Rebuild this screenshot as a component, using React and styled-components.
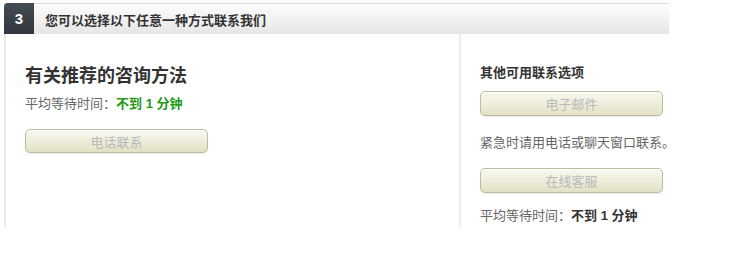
import React from "react";
import styled, { createGlobalStyle } from "styled-components";

const Global = createGlobalStyle`
  html, body { margin: 0; padding: 0; background: #fff; }
  body { font-family: "Liberation Sans", "Noto Sans CJK SC", sans-serif; color: #333; }
`;

const Panel = styled.div`
  margin: 3px 0 0 4px;
  width: 665px;
`;

const Header = styled.div`
  display: flex;
  align-items: stretch;
  height: 30px;
  border-top: 1px solid #dcdcdc;
  background: linear-gradient(#fdfdfd, #e6e6e6);
`;

const StepNo = styled.div`
  width: 30px;
  display: flex;
  align-items: center;
  justify-content: center;
  background: linear-gradient(#454b52, #30363c);
  color: #fff;
  font-weight: bold;
  font-size: 15px;
  border-top-left-radius: 4px;
  margin-top: -1px;
`;

const HeaderTitle = styled.div`
  display: flex;
  align-items: center;
  padding-left: 11px;
  font-size: 13px;
  font-weight: bold;
  color: #333;
`;

const Body = styled.div`
  display: grid;
  grid-template-columns: 455px 1fr;
  height: 193px;
`;

const Column = styled.div`
  border-left: 2px solid #ececec;
  padding: ${(p) => p.$pad};
  display: flex;
  flex-direction: column;
  align-items: flex-start;
  min-width: 0;
`;

const BigTitle = styled.h2`
  margin: 0;
  font-size: 18px;
  line-height: 22px;
  font-weight: bold;
  color: #333;
`;

const SmallTitle = styled.h3`
  margin: 0;
  font-size: 13px;
  line-height: 16px;
  font-weight: bold;
  color: #333;
`;

const Text = styled.p`
  margin: ${(p) => p.$mt}px 0 0 0;
  font-size: 13px;
  line-height: 16px;
  color: #666;
  white-space: nowrap;
`;

const Strong = styled.span`
  font-weight: bold;
  color: ${(p) => (p.$green ? "#229a14" : "#333")};
`;

const Button = styled.button`
  margin-top: ${(p) => p.$mt}px;
  width: 183px;
  height: ${(p) => p.$h}px;
  border: 1px solid #bdbca0;
  border-radius: 5px;
  background: linear-gradient(#f8f8ef 0%, #f0efde 45%, #e3e1c3 100%);
  box-shadow: inset 0 1px 0 #fff, 0 1px 1px rgba(0,0,0,0.08);
  color: #b9b9b9;
  font-family: inherit;
  font-size: 13px;
  padding: 0;
  cursor: default;
  flex-shrink: 0;
`;

export default function App() {
  return (
    <>
      <Global />
      <Panel>
        <Header>
          <StepNo>3</StepNo>
          <HeaderTitle>您可以选择以下任意一种方式联系我们</HeaderTitle>
        </Header>
        <Body>
          <Column $pad="31px 0 0 19px">
            <BigTitle>有关推荐的咨询方法</BigTitle>
            <Text $mt={9}>
              平均等待时间：<Strong $green>不到 1 分钟</Strong>
            </Text>
            <Button $mt={17} $h={24}>电话联系</Button>
          </Column>
          <Column $pad="31px 0 0 19px">
            <SmallTitle>其他可用联系选项</SmallTitle>
            <Button $mt={10} $h={25}>电子邮件</Button>
            <Text $mt={19}>紧急时请用电话或聊天窗口联系。</Text>
            <Button $mt={17} $h={25}>在线客服</Button>
            <Text $mt={15}>
              平均等待时间：<Strong>不到 1 分钟</Strong>
            </Text>
          </Column>
        </Body>
      </Panel>
    </>
  );
}
